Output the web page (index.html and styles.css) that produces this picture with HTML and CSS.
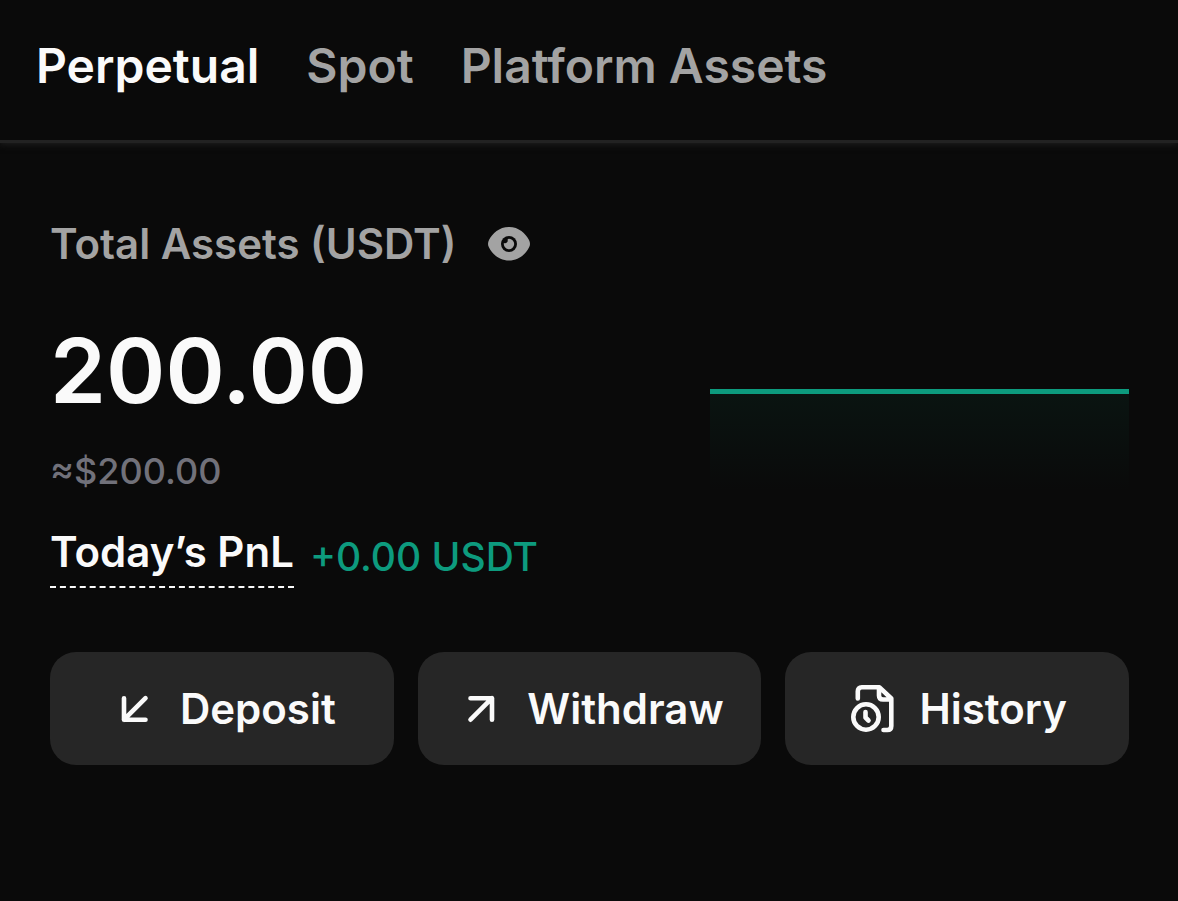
FILE: index.html
```html
<!DOCTYPE html>
<html lang="en">
<head>
<meta charset="utf-8">
<meta name="viewport" content="width=device-width, initial-scale=1">
<title>Assets</title>
<link rel="stylesheet" href="styles.css">
</head>
<body>
<nav class="tabs" aria-label="Asset types">
  <button class="tab tab-active" type="button">Perpetual</button>
  <button class="tab" type="button">Spot</button>
  <button class="tab" type="button">Platform Assets</button>
</nav>
<main class="assets">
  <div class="total">
    <h1 class="total-label">Total Assets (USDT)</h1>
    <button class="eye" type="button" aria-label="Hide balance">
      <svg class="eye-icon" viewBox="0 0 42 34" aria-hidden="true">
        <path fill="currentColor" d="M21 0C11 0 4.500 6.500 1 13Q-1 17 1 20.500C5 28 12 33.500 21 33.500S37 28 41 20.500Q43 17 41 13C37.500 6.500 31 0 21 0Z"/>
        <circle cx="21" cy="17" r="8" fill="#0a0a0a"/>
        <path fill="currentColor" d="M21 11.800a5.200 5.200 0 1 1-5.100 4.200 2.600 2.600 0 0 0 3.600-3.300q.5-.9 1.500-.9Z"/>
      </svg>
    </button>
  </div>
  <div class="summary">
    <div class="balance">
      <p class="amount">200.00</p>
      <p class="fiat">≈$200.00</p>
    </div>
    <div class="chart" role="img" aria-label="Balance trend"></div>
  </div>
  <div class="pnl">
    <span class="pnl-label">Today’s PnL</span>
    <span class="pnl-value">+0.00 USDT</span>
  </div>
  <div class="actions">
    <button class="action" type="button">
      <svg class="icon" viewBox="0 0 50 50" aria-hidden="true"><path d="M37.500 14.200 16 35.700M16 14.200V35.700H37.500"/></svg>
      <span>Deposit</span>
    </button>
    <button class="action" type="button">
      <svg class="icon" viewBox="0 0 50 50" aria-hidden="true"><path d="M15.500 35.700 37 14.200M15.500 14.200H37V35.700"/></svg>
      <span>Withdraw</span>
    </button>
    <button class="action" type="button">
      <svg class="icon" viewBox="0 0 50 50" aria-hidden="true"><path d="M10.800 14.500V7.300Q10.800 3.300 14.800 3.300H32.500L44.300 14.500V42Q44.300 46 40.300 46H36.500M32 3.300V11.500Q32 15.500 36 15.500H44.300"/><circle cx="19" cy="33" r="12.700"/><path d="M18.500 28V33.500L21.500 36.500"/></svg>
      <span>History</span>
    </button>
  </div>
</main>
</body>
</html>
```
FILE: styles.css
```css
* { box-sizing: border-box; }
body {
  margin: 0;
  min-height: 100vh;
  background: #0a0a0a;
  color: #fafafa;
  font-family: Inter, "Liberation Sans", sans-serif;
  font-weight: 500;
}
button {
  padding: 0;
  border: 0;
  background: none;
  color: inherit;
  font: inherit;
  cursor: pointer;
}
h1, p { margin: 0; }
.tabs {
  display: flex;
  gap: 47px;
  padding: 36px 36px 44px;
  border-bottom: 3px solid #222;
  box-shadow: 0 2px 6px #1c1c1c;
}
.tab {
  color: #a3a3a3;
  font-size: 48px;
  font-weight: 600;
  line-height: 60px;
}
.tab-active { color: #fafafa; }
.assets { padding: 71px 49px 48px 50px; }
.total { display: flex; align-items: center; gap: 32px; color: #a3a3a3; }
.total-label { font-size: 42px; font-weight: 600; line-height: 60px; }
.eye { display: flex; }
.eye-icon { width: 42px; height: 34px; }
.summary { display: flex; justify-content: space-between; }
.amount { margin-top: 37px; font-size: 90px; line-height: 120px; font-weight: 600; }
.fiat { margin-top: 16px; color: #71717a; font-size: 36px; font-weight: 500; line-height: 48px; }
.chart {
  width: 419px;
  max-width: 50%;
  height: 112px;
  margin-top: 115px;
  border-top: 5px solid #0d9b7e;
  background: linear-gradient(#0a1411, #0a0a0a 90%);
}
.pnl { display: flex; align-items: center; gap: 16px; margin-top: 21px; }
.pnl-label {
  margin-bottom: 4px;
  padding-bottom: 4px;
  border-bottom: 2px dashed #fafafa;
  font-size: 42px;
  font-weight: 600;
  line-height: 60px;
}
.pnl-value { color: #0d9b7e; font-size: 39px; line-height: 60px; }
.actions {
  display: grid;
  grid-template-columns: repeat(3, 1fr);
  gap: 24px;
  margin-top: 60px;
}
.action {
  display: flex;
  align-items: center;
  justify-content: center;
  gap: 22px;
  min-height: 113px;
  border-radius: 26px;
  background: #262626;
  font-size: 42px;
  font-weight: 600;
  line-height: 60px;
}
.icon {
  width: 50px;
  height: 50px;
  fill: none;
  stroke: currentColor;
  stroke-width: 4.600;
  stroke-linecap: round;
  stroke-linejoin: round;
}
```
